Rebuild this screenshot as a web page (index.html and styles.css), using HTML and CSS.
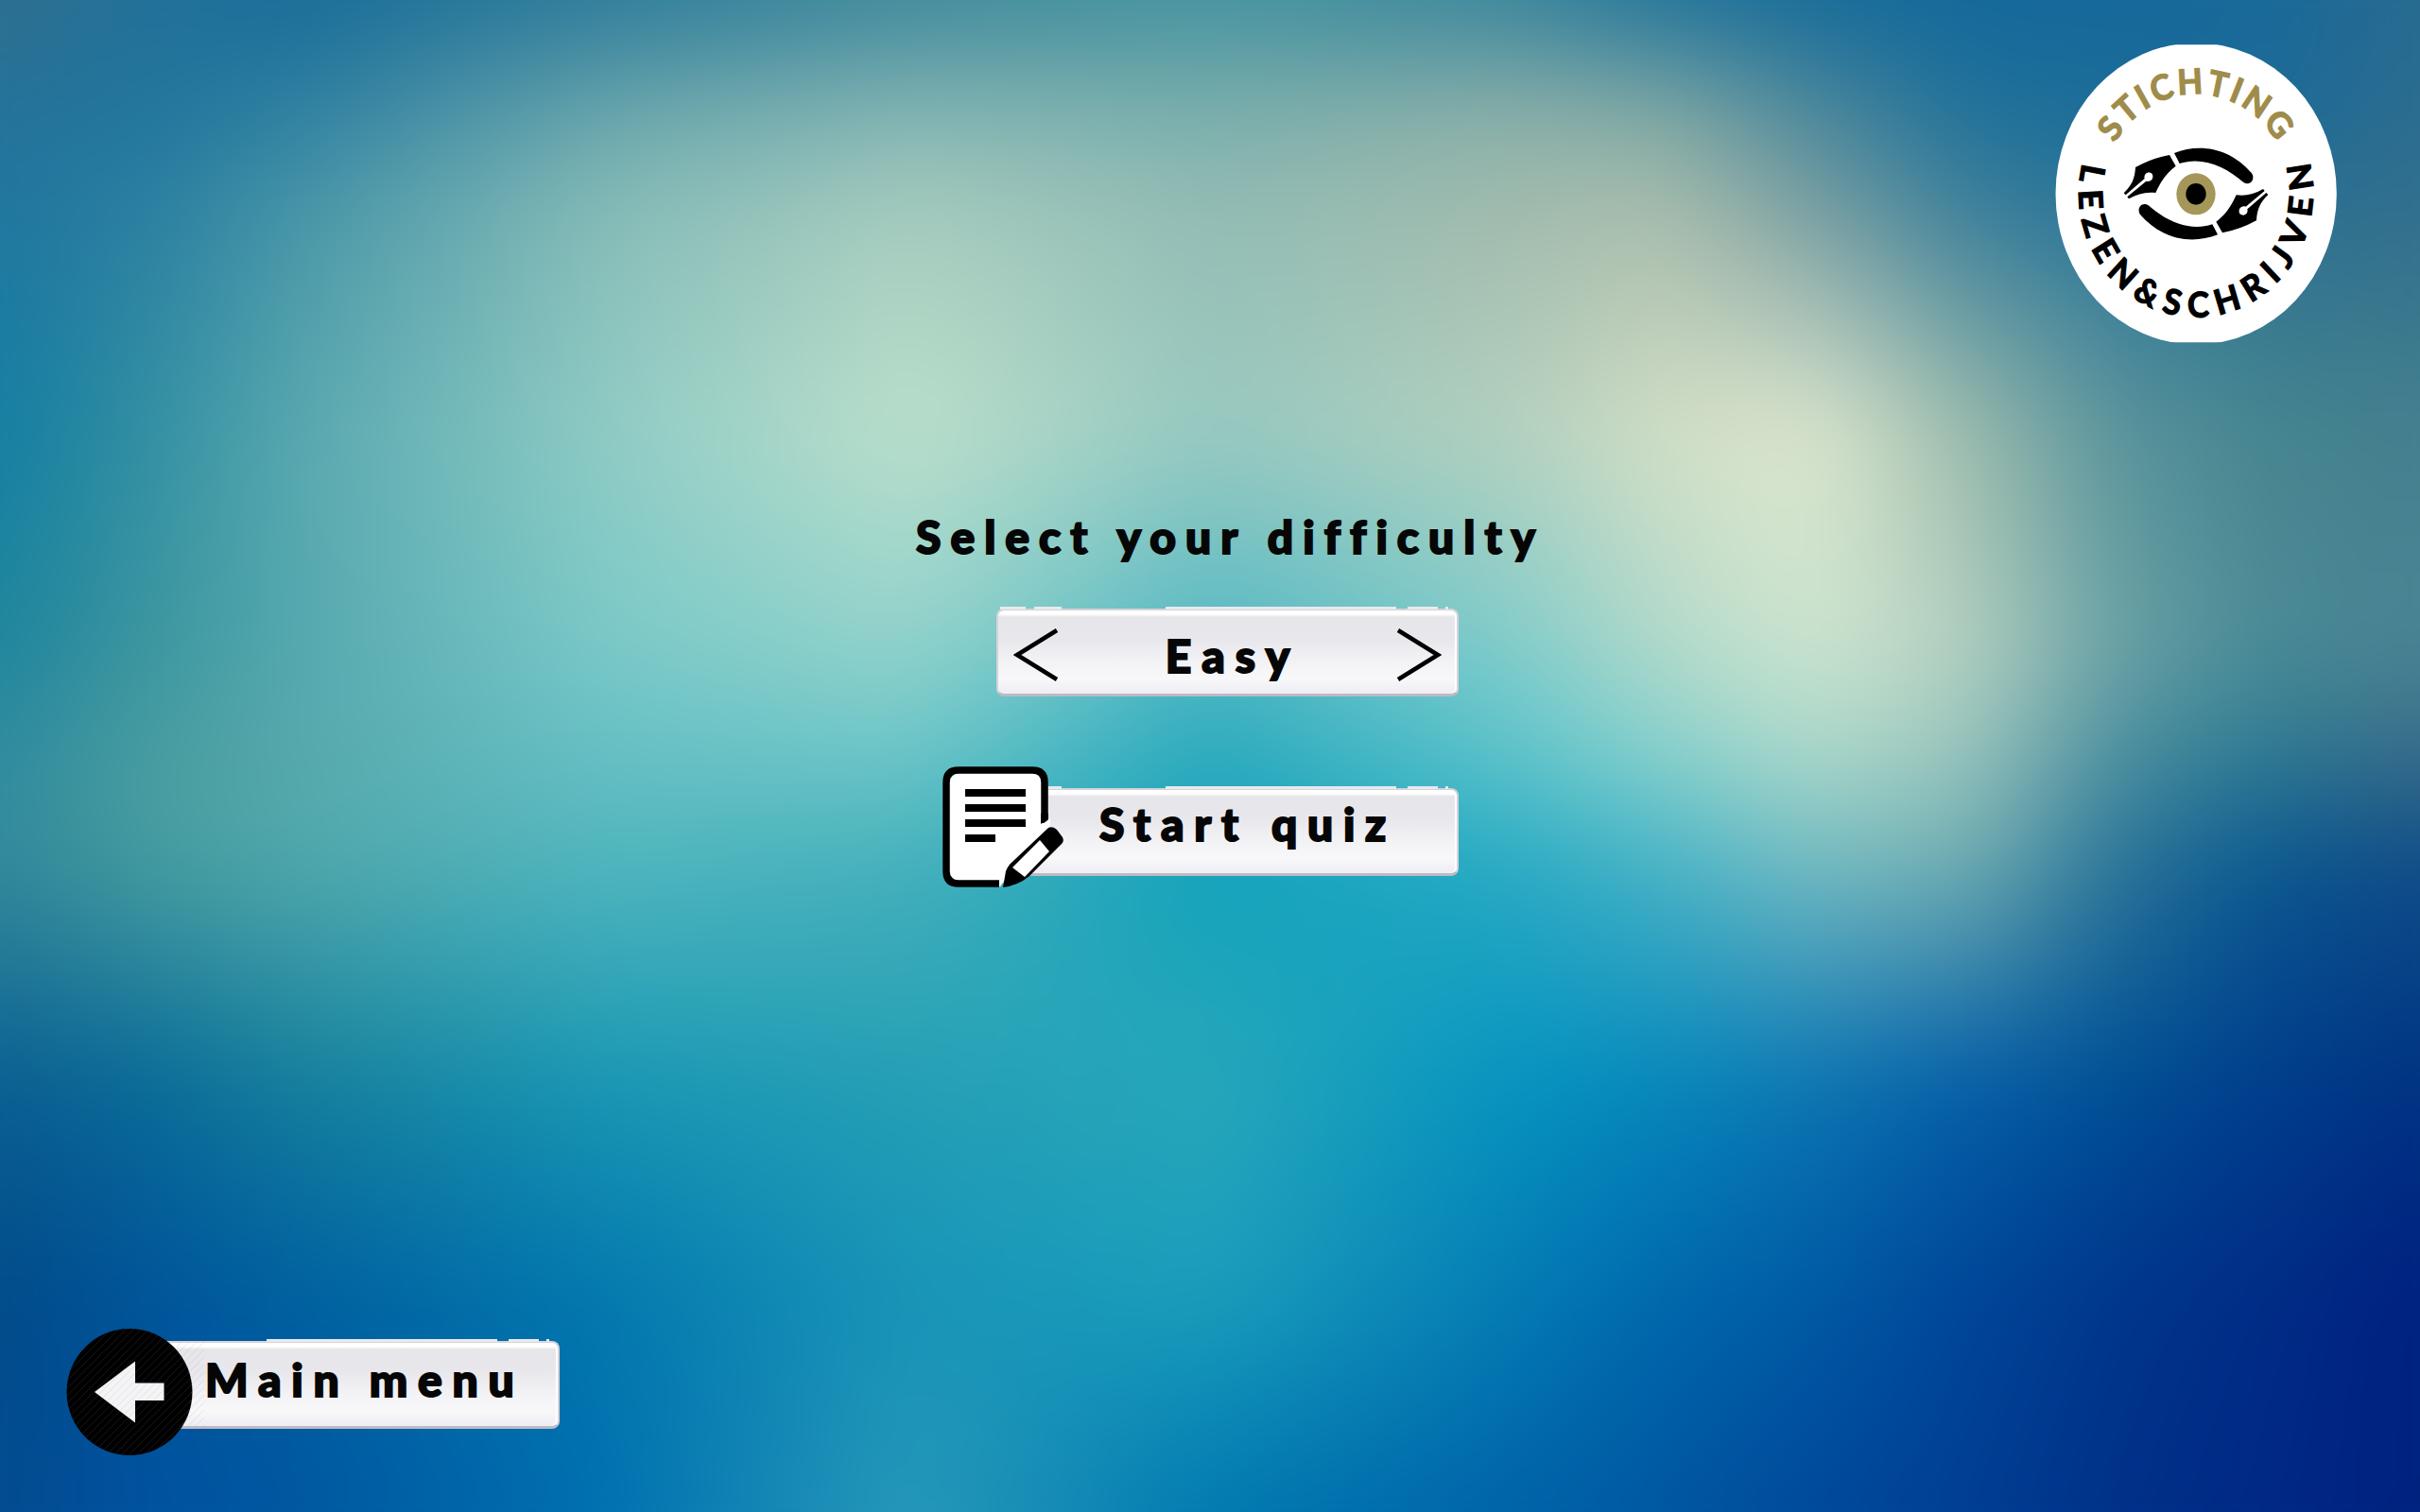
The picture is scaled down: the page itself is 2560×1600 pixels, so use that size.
FILE: index.html
```html
<!DOCTYPE html>
<html lang="en">
<head>
<meta charset="utf-8">
<title>Quiz difficulty</title>
<link rel="stylesheet" href="styles.css">
</head>
<body>
<div class="backdrop">
  <div class="field">
    <div class="band band-1"></div>
    <div class="band band-2"></div>
    <div class="band band-3"></div>
    <div class="band band-4"></div>
    <div class="band band-5"></div>
    <div class="band band-6"></div>
    <div class="band band-7"></div>
    <div class="band band-8"></div>
    <div class="band band-9"></div>
    <div class="band band-10"></div>
  </div>
</div>
<div class="screen">
  <header class="top">
    <svg class="logo" viewBox="0 0 1050 1050">
      <clipPath id="badge"><rect x="60" y="52" width="920" height="945"/></clipPath>
      <ellipse cx="519.500" cy="525" rx="446" ry="479" fill="#fff" clip-path="url(#badge)"/>
      <g transform="translate(519 525) scale(.945 1)">
        <path id="arc-top" fill="none" d="M-273 -160A316 316 0 0 1 273 -160"/>
        <path id="arc-bottom" fill="none" d="M-381 -98A393 393 0 1 0 381 -98"/>
        <text class="logo-text gold" textLength="655"><textPath href="#arc-top">STICHTING</textPath></text>
        <text class="logo-text" textLength="1432"><textPath href="#arc-bottom">LEZEN&amp;SCHRIJVEN</textPath></text>
      </g>
      <g>
        <path d="M450 396C530 365 625 378 696 460C709 480 690 502 670 489C615 440 540 405 467 429Z"/>
        <path d="M435 402L455 437C430 455 410 480 391 522C360 518 335 525 306 541L301 535L361 485C376 490 387 475 380 462C366 451 352 464 356 477L296 529L290 523C315 498 325 478 327 441Q380 412 435 402Z"/>
      </g>
      <g transform="rotate(180 519 525.500)">
        <path d="M450 396C530 365 625 378 696 460C709 480 690 502 670 489C615 440 540 405 467 429Z"/>
        <path d="M435 402L455 437C430 455 410 480 391 522C360 518 335 525 306 541L301 535L361 485C376 490 387 475 380 462C366 451 352 464 356 477L296 529L290 523C315 498 325 478 327 441Q380 412 435 402Z"/>
      </g>
      <ellipse cx="519" cy="526" rx="62" ry="66" fill="#a5965a"/>
      <ellipse cx="519" cy="526" rx="32" ry="34"/>
    </svg>
  </header>
  <main class="menu">
    <h1 class="label title">Select your difficulty</h1>
    <div class="panel picker">
      <svg class="chevron" viewBox="0 0 48 56"><path d="M46 2L4 28L46 54"/></svg>
      <span class="label value">Easy</span>
      <svg class="chevron" viewBox="0 0 48 56"><path d="M2 2L44 28L2 54"/></svg>
    </div>
    <div class="start">
      <div class="panel start-panel"><span class="label start-label">Start quiz</span></div>
      <svg class="note" viewBox="0 0 130 130">
        <path fill="#fff" d="M17 4H95L111 12V56L66 104L61 128V124H17L4 111V17Z"/>
        <path fill="none" stroke="#000" stroke-width="7.500" d="M108 60V17Q108 4 95 4H17Q4 4 4 17V111Q4 124 17 124H60"/>
        <path d="M24 24H88V32H24ZM24 40H88V48H24ZM24 56H88V64H24ZM24 72H56V80H24Z"/>
        <path fill="#fff" d="M103 63L114 55V62L75 110L60 128V120L66 100Z"/>
        <path d="M104 61L112 55V50H104ZM112 65Q117 63 121 67L127 75Q129 79 126 82L92 116Q80 126 64 128L67 111Q69 105 75 100Z"/>
        <path fill="#fff" d="M103 78L113 90L87 117L74 107Z"/>
      </svg>
    </div>
  </main>
  <footer class="bottom">
    <div class="back">
      <div class="panel back-panel"><span class="label back-label">Main menu</span></div>
      <svg class="back-icon" viewBox="0 0 146 134">
        <defs>
          <pattern id="hatch" width="8" height="8" patternUnits="userSpaceOnUse">
            <path d="M-2 10L10 -2M-2 2L2 -2M6 10L10 6" stroke="#888890" stroke-opacity=".16" stroke-width="1"/>
          </pattern>
        </defs>
        <ellipse cx="67" cy="67" rx="66.500" ry="67"/>
        <path fill="#f4f4f6" d="M30 67L73 34.500V57.500H103.500V76H73V99.500Z"/>
        <ellipse cx="67" cy="67" rx="66.500" ry="67" fill="url(#hatch)"/>
        <path fill="url(#hatch)" d="M112 14H146V104H120Q147 60 112 14Z"/>
      </svg>
    </div>
  </footer>
</div>
</body>
</html>
```
FILE: styles.css
```css
* { box-sizing: border-box; }
html { overflow: hidden; }
body {
  margin: 0;
  width: 2560px;
  height: 1600px;
  overflow: hidden;
  position: relative;
  background: #1c8fb0;
  font-family: Lato, "Open Sans", sans-serif;
}

/* Soft colour field: horizontal gradients cross-faded from top to bottom */
.backdrop {
  position: absolute;
  inset: 0;
  overflow: hidden;
}
.field {
  display: grid;
  width: 2760px;
  height: 1800px;
  margin: -100px;
  filter: blur(45px);
}
.band {
  grid-area: 1 / 1;
  background: linear-gradient(90deg, var(--a) 100px, var(--b) 260px, var(--c) 420px, var(--d) 740px, var(--e) 1060px, var(--f) 1380px, var(--g) 1700px, var(--h) 1860px, var(--i) 2020px, var(--j) 2180px, var(--k) 2340px, var(--l) 2500px, var(--m) 2660px);
  -webkit-mask-image: linear-gradient(transparent var(--from), #000 var(--to));
  mask-image: linear-gradient(transparent var(--from), #000 var(--to));
}
.band-1 { --from: 0px; --to: 1px; --a: #2f6f8e; --b: #22709a; --c: #1a6c98; --d: #2d7b9b; --e: #3f899c; --f: #4593a0; --g: #3a859c; --h: #22739a; --i: #176b99; --j: #14689b; --k: #14689b; --l: #19699a; --m: #286b8f; }
.band-2 { --from: 100px; --to: 214px; --a: #25729a; --b: #22769c; --c: #2f80a2; --d: #68a5ab; --e: #82b3b2; --f: #7aaeab; --g: #8aafa8; --h: #7fa8a3; --i: #4b879a; --j: #20719a; --k: #1c6d98; --l: #1c6a97; --m: #2c6d90; }
.band-3 { --from: 214px; --to: 329px; --a: #20779f; --b: #2c80a2; --c: #4a98a8; --d: #88bdb8; --e: #a8cdbf; --f: #94bdb5; --g: #a3bcae; --h: #adbfad; --i: #7ea1a2; --j: #40829a; --k: #2a7398; --l: #2d7090; --m: #336f8d; }
.band-4 { --from: 329px; --to: 557px; --a: #147ea3; --b: #3390a2; --c: #5aa9b0; --d: #90ccc5; --e: #bde0cc; --f: #98c9c0; --g: #b5d1bf; --h: #d3dfc6; --i: #dfe8cf; --j: #9dbcac; --k: #5a949c; --l: #45858f; --m: #44808f; }
.band-5 { --from: 557px; --to: 786px; --a: #1f859c; --b: #3c969f; --c: #56a9af; --d: #7ac9c8; --e: #92d2cb; --f: #50b8c4; --g: #80cccb; --h: #b2d9ca; --i: #cde5d0; --j: #b5d0c0; --k: #6aa2a5; --l: #4a8a96; --m: #4a8494; }
.band-6 { --from: 786px; --to: 900px; --a: #2f8b9f; --b: #4a9da0; --c: #58aaad; --d: #66bfc4; --e: #6cc6c8; --f: #28a8bd; --g: #5cc4cb; --h: #85d0cc; --i: #acd8ca; --j: #98c4bc; --k: #4a8e9e; --l: #2c7a92; --m: #386a88; }
.band-7 { --from: 900px; --to: 1014px; --a: #33899a; --b: #459c9f; --c: #50a8ac; --d: #50b6be; --e: #45b0bb; --f: #11a2bb; --g: #28aac4; --h: #48b4c6; --i: #75bcc2; --j: #70adb0; --k: #2a7498; --l: #0a5890; --m: #104c88; }
.band-8 { --from: 1014px; --to: 1243px; --a: #0a5f92; --b: #0a6c98; --c: #16809c; --d: #1a98b4; --e: #259fb5; --f: #28a8ba; --g: #0694c0; --h: #0688bc; --i: #0d76b2; --j: #0560a8; --k: #005095; --l: #003e8c; --m: #003382; }
.band-9 { --from: 1243px; --to: 1471px; --a: #024a88; --b: #00549a; --c: #0060a0; --d: #0378ae; --e: #1894b8; --f: #1a9fbc; --g: #047cb4; --h: #0068ac; --i: #005aa4; --j: #004698; --k: #00368c; --l: #002c86; --m: #002080; }
.band-10 { --from: 1471px; --to: 1700px; --a: #034a90; --b: #0052a0; --c: #0057a0; --d: #0070b0; --e: #2899b9; --f: #0078b0; --g: #0062a8; --h: #0056a0; --i: #00489a; --j: #003e92; --k: #003088; --l: #002884; --m: #00207e; }

.screen {
  position: relative;
  height: 1600px;
  display: flex;
  flex-direction: column;
}
.top {
  display: flex;
  justify-content: flex-end;
  padding: 30px 60px 0 0;
  height: 540px;
}
.logo { width: 350px; height: 350px; }
.logo-text { font-weight: 700; font-size: 110px; stroke: #000; stroke-width: 4px; }
.gold { fill: #9f8c4b; stroke: #9f8c4b; }

.label {
  margin: 0;
  color: #060606;
  font-weight: 900;
  font-size: 48px;
  line-height: 56px;
  white-space: pre;
  -webkit-text-stroke: 2px #060606;
}
.menu {
  width: 680px;
  margin-left: 969px;
  display: flex;
  flex-direction: column;
}
.title { letter-spacing: 10px; word-spacing: 1px; }

.panel {
  position: relative;
  height: 93px;
  border-radius: 8px;
  display: flex;
  border: 2px solid #d6d3d9;
  border-bottom: 3px solid #bdbac3;
  background: linear-gradient(#fff 0 4px, #e6e6ea 7px, #e8e7ec 35%, #f2f2f5 60%, #f8f8fa 82%, #eeedf4);
  box-shadow: inset -2px 0 1px #fff;
}
/* Broken highlight along the upper edge */
.panel::before {
  content: "";
  position: absolute;
  left: 0;
  right: 0;
  top: -4px;
  height: 3px;
  background: linear-gradient(270deg, transparent 9px, #e9eaee 9px 12px, transparent 12px 20px, #e9eaee 20px 52px, transparent 52px 64px, #e9eaee 64px 308px, transparent 308px 418px, #e9eaee 418px 447px, transparent 447px 456px, #e9eaee 456px 483px, transparent 483px);
}
.picker {
  width: 489px;
  margin: 48px 0 0 85px;
  padding: 19px 16px 0 16px;
  justify-content: space-between;
  align-items: flex-start;
}
.chevron { width: 48px; height: 56px; fill: none; stroke: #000; stroke-width: 4.500; }
.value { letter-spacing: 11px; padding-top: 1px; margin-right: -11px; }
.start {
  position: relative;
  margin: 97px 0 0 28px;
}
.start-panel { width: 466px; margin-left: 80px; padding: 8px 0 0 84px; }
.start-label { letter-spacing: 10.700px; word-spacing: 2px; }
.note {
  position: absolute;
  left: 0;
  top: -23px;
  width: 130px;
  height: 130px;
}

.bottom {
  margin-top: auto;
  height: 181px;
  padding-left: 70px;
}
.back { position: relative; }
.back-panel { width: 442px; margin-left: 80px; padding: 11px 0 0 65px; }
.back-label { letter-spacing: 10.800px; word-spacing: -1px; }
.back-icon {
  position: absolute;
  left: 0;
  top: -13px;
  width: 146px;
  height: 134px;
}
```
